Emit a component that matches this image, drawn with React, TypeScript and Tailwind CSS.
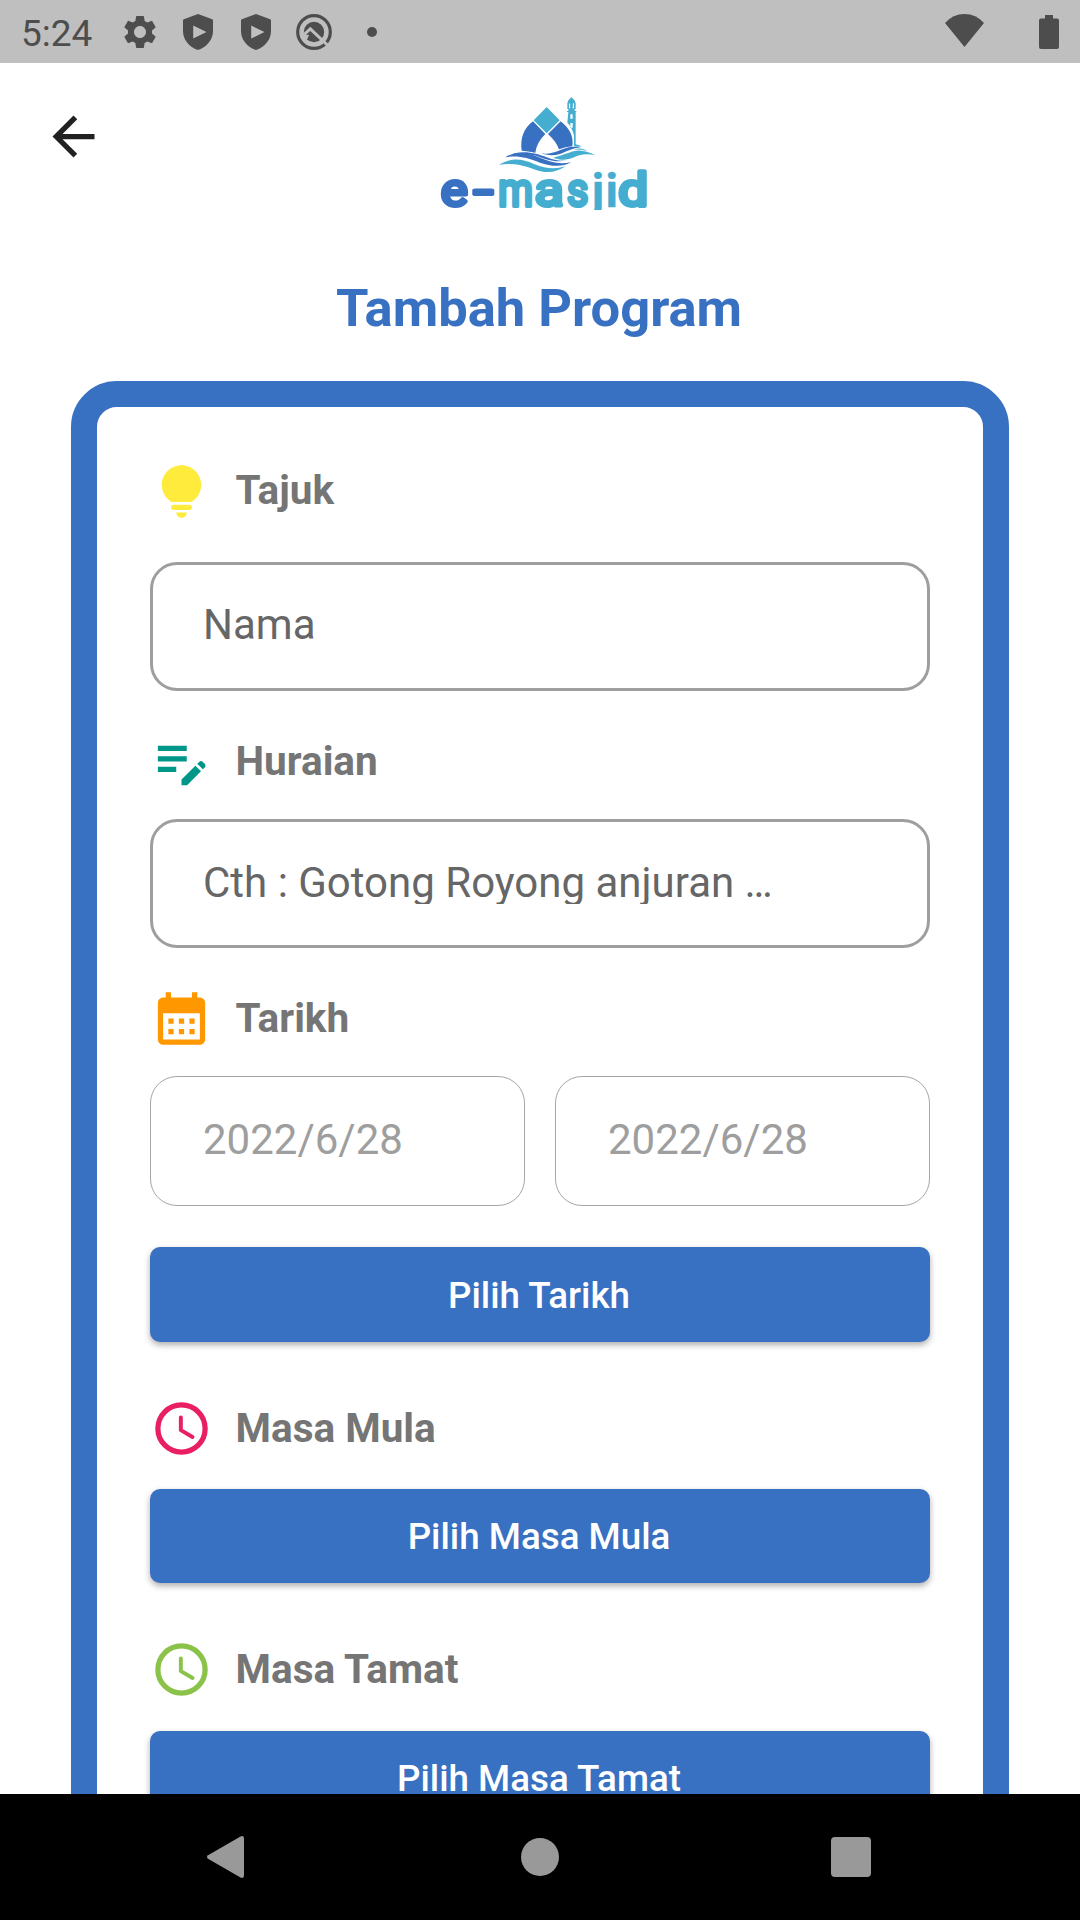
import type { ReactNode } from "react";
import { MdArrowBack, MdCalendarMonth, MdEditNote, MdSettings } from "react-icons/md";

function ShieldIcon() {
  return (
    <svg className="h-9 w-[30px]" viewBox="0 0 30 36" fill="#4d4d4d">
      <path
        fillRule="evenodd"
        d="M15 0 29.2 5.2Q30 5.6 30 6.6V17C30 25.500 24 33 15 36 6 33 0 25.500 0 17V6.600Q0 5.600.8 5.200ZM10.200 11.600V24.600L23.400 18.100Z"
      />
    </svg>
  );
}

function SearchBadgeIcon() {
  return (
    <svg className="size-9" viewBox="0 0 36 36">
      <circle cx="18" cy="18" r="16.300" fill="none" stroke="#4d4d4d" strokeWidth="3.200" />
      <circle cx="18" cy="18" r="10.200" fill="#4d4d4d" />
      <path d="M6.500 22 14.300 14.800 33.500 33" fill="none" stroke="#bfbfbf" strokeWidth="3" />
      <path d="M6 20 13 21 10.500 27 6 26Z" fill="#bfbfbf" />
    </svg>
  );
}

function StatusBar() {
  return (
    <header className="flex h-[63px] shrink-0 items-center bg-[#bfbfbf] text-[#4d4d4d]">
      <span className="ml-[21px] w-[99px] pt-[4px] text-[37px] leading-none">5:24</span>
      <MdSettings className="size-10" />
      <div className="ml-[23px] flex items-center gap-7">
        <ShieldIcon />
        <ShieldIcon />
      </div>
      <div className="ml-[25px] flex">
        <SearchBadgeIcon />
      </div>
      <div className="ml-[35px] size-[10px] rounded-full bg-[#4d4d4d]" />
      <svg className="mb-[2px] ml-auto h-[33px] w-[39px]" viewBox="0 0 39 33" fill="#4d4d4d">
        <path d="M0 9Q8 0 19.500 0T39 9L19.500 33Z" />
      </svg>
      <svg className="mr-[21px] ml-[55px] h-[34px] w-5" viewBox="0 0 20 34" fill="#4d4d4d">
        <path d="M6 0H14V3.500H18Q20 3.500 20 5.500V32Q20 34 18 34H2Q0 34 0 32V5.500Q0 3.500 2 3.500H6Z" />
      </svg>
    </header>
  );
}

function Logo() {
  return (
    <svg className="h-[135px] w-[230px]" viewBox="0 0 690 405">
      <clipPath id="wordmark">
        <rect width="690" height="375" />
      </clipPath>
      <path d="M350 66 389 106 350 145 311 106Z" fill="#45aed0" />
      <path d="M309 109 346 147Q320 172 316 203 294 198 275 197C270 160 281 130 309 109Z" fill="#3870c2" />
      <path d="M392 109 354 147Q379 170 387 193 407 186 427 184C432 155 419 130 392 109Z" fill="#3870c2" />
      <path
        fill="#45aed0"
        fillRule="evenodd"
        d="M421 40Q424 34 427 40 436 45 437 54V72H434V78H439V81H437V178Q447 181 455 184 443 187 432 183V150Q424 124 412 113L415 81H411V78H415V72H412V54Q413 45 421 40ZM417 55V70H421V57ZM428 55V70H432V55ZM421 88V101H428V88ZM421 114V128H428V114Z"
      />
      <path d="M421 48H428V66H421Z" fill="#45aed0" />
      <path d="M226 217C260 195 292 202 325 216 360 231 390 240 424 231 398 247 365 245 330 233 290 217 262 211 226 217Z" fill="#3870c2" />
      <path d="M242 209C280 194 320 205 350 217 372 226 394 229 410 226 376 234 347 223 318 212 292 205 267 204 242 209Z" fill="#3870c2" />
      <path d="M207 239C245 217 275 221 312 237 350 252 374 253 407 244 375 265 345 266 308 251 267 237 240 235 207 239Z" fill="#45aed0" />
      <path d="M333 205C370 211 390 191 420 186 436 184 447 186 457 187 430 188 412 199 390 207 370 213 350 211 333 205Z" fill="#3870c2" />
      <path d="M370 218C405 211 426 195 452 197 468 198 482 203 496 211 469 206 454 207 434 216 410 226 394 227 370 218Z" fill="#45aed0" />
      <path d="M430 194Q455 185 473 198 450 193 430 194Z" fill="#45aed0" />
      <text
        y="362"
        clipPath="url(#wordmark)"
        fontFamily="Roboto, sans-serif"
        fontWeight="400"
        fontSize="136"
        fill="#45aed0"
        stroke="#45aed0"
        strokeWidth="12"
        strokeLinejoin="round"
      >
        <tspan x="32" fill="#3870c2" stroke="#3870c2" textLength="81" lengthAdjust="spacingAndGlyphs">e</tspan>
        <tspan x="132" fill="#3870c2" stroke="#3870c2" textLength="56" lengthAdjust="spacingAndGlyphs">-</tspan>
        <tspan x="205" textLength="104" lengthAdjust="spacingAndGlyphs">m</tspan>
        <tspan x="314" textLength="87" lengthAdjust="spacingAndGlyphs">a</tspan>
        <tspan x="411" textLength="64" lengthAdjust="spacingAndGlyphs">s</tspan>
        <tspan x="486" y="365" fontWeight="700" strokeWidth="2">j</tspan>
        <tspan x="527" y="365" fontWeight="700" strokeWidth="2">i</tspan>
        <tspan x="565" y="362" textLength="90" lengthAdjust="spacingAndGlyphs">d</tspan>
      </text>
    </svg>
  );
}

function BulbIcon() {
  return (
    <svg className="size-[63px]" viewBox="0 0 24 24" fill="#ffeb3b">
      <path d="M12 22c1.100 0 2-.9 2-2h-4c0 1.100.9 2 2 2zM9 19h6c.55 0 1-.45 1-1s-.45-1-1-1H9c-.55 0-1 .45-1 1s.45 1 1 1zM12 2C7.860 2 4.500 5.360 4.500 9.500c0 3.820 2.660 5.860 3.770 6.500h7.460c1.110-.64 3.770-2.680 3.770-6.500C19.500 5.360 16.140 2 12 2z" />
    </svg>
  );
}

function ClockIcon() {
  return (
    <svg className="size-[63px]" viewBox="0 0 24 24" fill="none" stroke="currentColor">
      <circle cx="12" cy="12" r="9" strokeWidth="2" />
      <path d="M11.750 7.750V12.600L16.200 15.250" strokeWidth="1.500" strokeLinecap="round" strokeLinejoin="round" />
    </svg>
  );
}

function FieldLabel({ icon, children }: { icon: ReactNode; children: ReactNode }) {
  return (
    <div className="flex h-[63px] items-center">
      {icon}
      <div className="ml-[22.500px] text-[40.500px] leading-none font-bold text-[#757575]">{children}</div>
    </div>
  );
}

function TextField({ children }: { children: ReactNode }) {
  return (
    <div className="flex h-[129px] items-center rounded-[27px] border-3 border-[#9e9e9e] pb-[3px] pl-[50px] text-[42px] leading-[42px] text-[#666]">
      {children}
    </div>
  );
}

function DateField({ children }: { children: string }) {
  return (
    <div className="flex h-[130px] items-center rounded-[27px] border border-[#a6a6a6] pb-[2px] pl-[52px] text-[42px] leading-none text-[#9e9e9e]">
      {children}
    </div>
  );
}

function PickButton({ children }: { children: string }) {
  return (
    <button className="block h-[94.500px] w-full rounded-[10px] bg-[#3870c2] pt-[3px] pr-[2px] text-[36.75px] leading-none font-medium text-white shadow-[0_3px_6px_rgba(0,0,0,0.32)]">
      {children}
    </button>
  );
}

export default function App() {
  return (
    <div className="flex h-[1920px] w-[1080px] flex-col overflow-hidden bg-white font-['Roboto',sans-serif]">
      <StatusBar />
      <main className="h-[1731px] shrink-0 overflow-hidden">
        <div className="flex h-[157px] items-start">
          <MdArrowBack className="mt-[42px] ml-[42px] size-[63px] shrink-0 text-[#212121]" />
          <div className="mt-[22px] ml-[325px]">
            <Logo />
          </div>
        </div>
        <h1 className="mt-[62px] pr-[2px] text-center text-[52.500px] leading-[52px] font-bold text-[#3870c2]">Tambah Program</h1>
        <section className="mx-[71px] mt-[47px] rounded-[46px] border-[26px] border-[#3870c2] px-[53px] pt-[52.600px] pb-[100px]">
          <FieldLabel icon={<BulbIcon />}>
            <div className="pb-[2px]">Tajuk</div>
          </FieldLabel>
          <div className="mt-[39.400px]">
            <TextField>Nama</TextField>
          </div>
          <div className="mt-[39px]">
            <FieldLabel icon={<MdEditNote className="size-[63px] text-[#009688]" />}>Huraian</FieldLabel>
          </div>
          <div className="mt-[26.400px]">
            <TextField>
              <div className="mt-[2px] h-[42px] overflow-hidden">Cth : Gotong Royong anjuran …</div>
            </TextField>
          </div>
          <div className="mt-[38.600px]">
            <FieldLabel icon={<MdCalendarMonth className="size-[63px] text-[#ff9800]" />}>Tarikh</FieldLabel>
          </div>
          <div className="mt-[26px] grid grid-cols-2 gap-[30px]">
            <DateField>2022/6/28</DateField>
            <DateField>2022/6/28</DateField>
          </div>
          <div className="mt-[41.300px]">
            <PickButton>Pilih Tarikh</PickButton>
          </div>
          <div className="mt-[55.200px] text-[#e91e63]">
            <FieldLabel icon={<ClockIcon />}>Masa Mula</FieldLabel>
          </div>
          <div className="mt-[29px]">
            <PickButton>Pilih Masa Mula</PickButton>
          </div>
          <div className="mt-[54.700px] text-[#8bc34a]">
            <FieldLabel icon={<ClockIcon />}>Masa Tamat</FieldLabel>
          </div>
          <div className="mt-[29.400px]">
            <PickButton>Pilih Masa Tamat</PickButton>
          </div>
        </section>
      </main>
      <nav className="flex h-[126px] shrink-0 items-center bg-black">
        <svg className="ml-[206px] h-[42px] w-[38px]" viewBox="0 0 38 42" fill="#999">
          <path d="M34.500.4Q38-.8 38 2.500V39.500Q38 42.800 34.500 41.600L2 22.800Q0 21 2 19.200Z" />
        </svg>
        <div className="ml-[277px] size-[38px] rounded-full bg-[#999]" />
        <div className="ml-[272px] size-10 rounded-[4px] bg-[#999]" />
      </nav>
    </div>
  );
}
